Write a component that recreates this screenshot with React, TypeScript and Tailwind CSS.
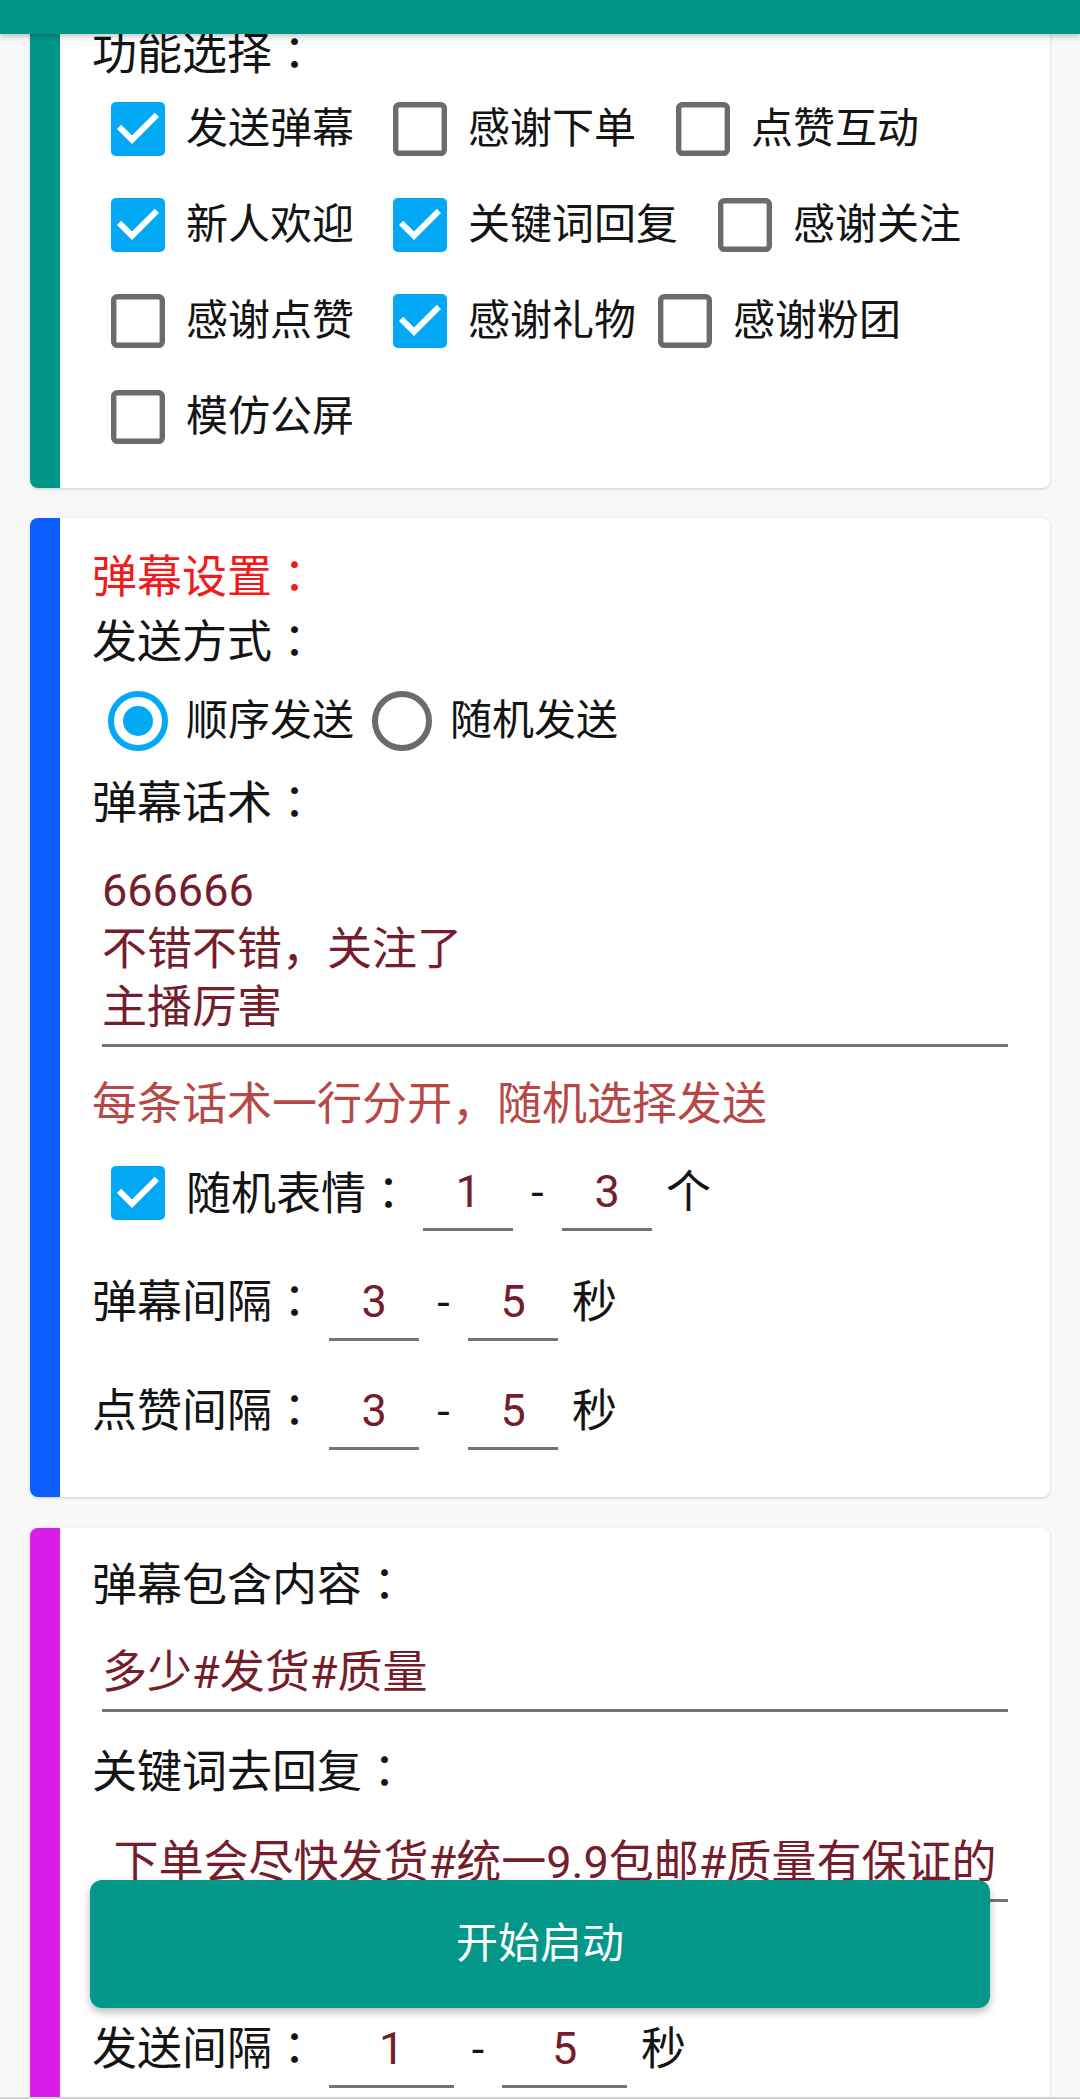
import clsx from 'clsx';

const FONT = "font-['Roboto','Noto_Sans_CJK_SC',sans-serif]";

// the reference font centres the full-width colon, the JP cut of Noto does that too
const Colon = () => <span className="font-['Noto_Sans_CJK_JP',sans-serif] leading-none">：</span>;

function CheckBox({ checked, label, className, textClass = 'text-[42px]' }: { checked: boolean; label: React.ReactNode; className?: string; textClass?: string }) {
  return (
    <div className={clsx('flex items-center', className)}>
      <span className="w-[96px] shrink-0 flex justify-center">
        <svg width="54" height="54" viewBox="3 3 18 18">
          {checked ? (
            <>
              <rect x="3" y="3" width="18" height="18" rx="1.6" fill="#03a9f4" />
              <path d="M10 17l-5-5 1.41-1.41L10 14.17l7.59-7.59L19 8z" fill="#fff" />
            </>
          ) : (
            <rect x="3.9" y="3.9" width="16.2" height="16.2" rx="1.2" fill="none" stroke="#6b6b6b" strokeWidth="1.8" />
          )}
        </svg>
      </span>
      <span className={clsx('leading-none text-[#141414] whitespace-nowrap', textClass)}>{label}</span>
    </div>
  );
}

function Radio({ checked, label }: { checked: boolean; label: string }) {
  const c = checked ? '#03a9f4' : '#6b6b6b';
  return (
    <div className="flex items-center">
      <span className="w-[96px] shrink-0 flex justify-center">
        <svg width="60" height="60" viewBox="2 2 20 20">
          <circle cx="12" cy="12" r="9" fill="none" stroke={c} strokeWidth="2" />
          {checked && <circle cx="12" cy="12" r="5" fill={c} />}
        </svg>
      </span>
      <span className="text-[42px] leading-none text-[#141414] whitespace-nowrap">{label}</span>
    </div>
  );
}

function NumInput({ value, width = 'w-[90px]' }: { value: string; width?: string }) {
  return (
    <div className={clsx('h-[76px] border-b-[3px] border-[#747474] flex items-center justify-center text-[45px] leading-none text-[#751d2b]', width)}>
      {value}
    </div>
  );
}

function Range({ from, to, unit, wide }: { from: string; to: string; unit: string; wide?: boolean }) {
  const w = wide ? 'w-[125px]' : 'w-[90px]';
  return (
    <div className="flex items-center ml-[12px]">
      <NumInput value={from} width={w} />
      <span className={clsx('text-center text-[45px] leading-none text-[#141414]', wide ? 'w-[48px]' : 'w-[49px]')}>-</span>
      <NumInput value={to} width={w} />
      <span className="ml-[14px] text-[45px] leading-none text-[#141414]">{unit}</span>
    </div>
  );
}

function Card({ accent, className, pad, children }: { accent: string; className?: string; pad: string; children: React.ReactNode }) {
  return (
    <div className={clsx('mx-[30px] flex rounded-[8px] overflow-hidden bg-white shadow-[0_1px_3px_rgba(0,0,0,0.18)]', className)}>
      <div className={clsx('w-[30px] shrink-0', accent)} />
      <div className={clsx('flex-1 min-w-0 pl-[30px] pr-[30px]', pad)}>{children}</div>
    </div>
  );
}

// standalone labels sit a little low in their 58px line, as Android draws them
const Label = ({ children, className, inline }: { children: React.ReactNode; className?: string; inline?: boolean }) => (
  <div
    className={clsx(
      'text-[45px] pl-[2px] whitespace-nowrap',
      inline ? 'leading-[58px]' : 'pt-[5px] leading-[53px]',
      className ?? 'text-[#141414]'
    )}
  >
    {children}
  </div>
);

export default function App() {
  return (
    <div className={clsx('relative h-[2099px] w-[1080px] overflow-hidden bg-[#f8f8f8]', FONT)}>
      <div className="-mt-[10px]">
        {/* 功能选择 */}
        <Card accent="bg-[#009688]" pad="pt-[33px] pb-[23px]">
          <Label>功能选择<Colon /></Label>
          <div className="flex items-center h-[96px]">
            <CheckBox checked label="发送弹幕" />
            <CheckBox checked={false} label="感谢下单" className="ml-[18px]" />
            <CheckBox checked={false} label="点赞互动" className="ml-[19px]" />
          </div>
          <div className="flex items-center h-[96px]">
            <CheckBox checked label="新人欢迎" />
            <CheckBox checked label="关键词回复" className="ml-[18px]" />
            <CheckBox checked={false} label="感谢关注" className="ml-[19px]" />
          </div>
          <div className="flex items-center h-[96px]">
            <CheckBox checked={false} label="感谢点赞" />
            <CheckBox checked label="感谢礼物" className="ml-[18px]" />
            <CheckBox checked={false} label="感谢粉团" className="ml-[1px]" />
          </div>
          <div className="flex items-center h-[96px]">
            <CheckBox checked={false} label="模仿公屏" />
          </div>
        </Card>

        {/* 弹幕设置 */}
        <Card accent="bg-[#0d5eff]" className="mt-[30px]" pad="pt-[28px] pb-[47px]">
          <Label className="text-[#f01c1c]">弹幕设置<Colon /></Label>
          <Label className="mt-[7px] text-[#141414]">发送方式<Colon /></Label>
          <div className="mt-[3px] h-[98px] flex items-center">
            <Radio checked label="顺序发送" />
            <Radio checked={false} label="随机发送" />
          </div>
          <Label className="mt-[2px] text-[#141414]">弹幕话术<Colon /></Label>
          <div className="mx-[12px] pt-[32px] pb-[6px] border-b-[3px] border-[#747474] text-[45px] leading-[58.5px] text-[#751d2b]">
            <div>666666</div>
            <div>不错不错，关注了</div>
            <div>主播厉害</div>
          </div>
          <Label className="mt-[26px] text-[#b84848]">每条话术一行分开，随机选择发送</Label>
          <div className="mt-[24px] flex items-center h-[76px]">
            <CheckBox checked label={<>随机表情<Colon /></>} textClass="text-[45px]" />
            <Range from="1" to="3" unit="个" />
          </div>
          <div className="mt-[34px] flex items-center h-[76px]">
            <Label inline>弹幕间隔<Colon /></Label>
            <Range from="3" to="5" unit="秒" />
          </div>
          <div className="mt-[33px] flex items-center h-[76px]">
            <Label inline>点赞间隔<Colon /></Label>
            <Range from="3" to="5" unit="秒" />
          </div>
        </Card>

        {/* 关键词回复 */}
        <Card accent="bg-[#d81ee8]" className="mt-[31px]" pad="pt-[26px] pb-[40px]">
          <Label>弹幕包含内容<Colon /></Label>
          <div className="mt-[24px] mx-[12px] h-[76px] border-b-[3px] border-[#747474] flex items-center text-[45px] leading-none text-[#751d2b]">
            多少#发货#质量
          </div>
          <Label className="mt-[29px] text-[#141414]">关键词去回复<Colon /></Label>
          <div className="mt-[27px] mx-[12px] h-[76px] border-b-[3px] border-[#747474] flex items-center justify-center text-[45px] leading-none text-[#751d2b] whitespace-nowrap">
            下单会尽快发货#统一9.9包邮#质量有保证的
          </div>
          <div className="mt-[110px] flex items-center h-[76px]">
            <Label inline>发送间隔<Colon /></Label>
            <Range from="1" to="5" unit="秒" wide />
          </div>
          <div className="h-[200px]" />
        </Card>
      </div>

      {/* top bar over the scrolled content */}
      <div className="absolute top-0 left-0 right-0 h-[34px] bg-[#009688] shadow-[0_2px_6px_rgba(0,0,0,0.25)]" />

      {/* floating start button */}
      <button className="absolute left-[90px] right-[90px] bottom-[91px] h-[128px] rounded-[12px] bg-[#03978a] text-white text-[42px] leading-none shadow-[0_4px_8px_rgba(0,0,0,0.28)]">
        开始启动
      </button>

      <div className="absolute bottom-0 left-0 right-0 h-[2px] bg-[#d2d2d2]" />
    </div>
  );
}
